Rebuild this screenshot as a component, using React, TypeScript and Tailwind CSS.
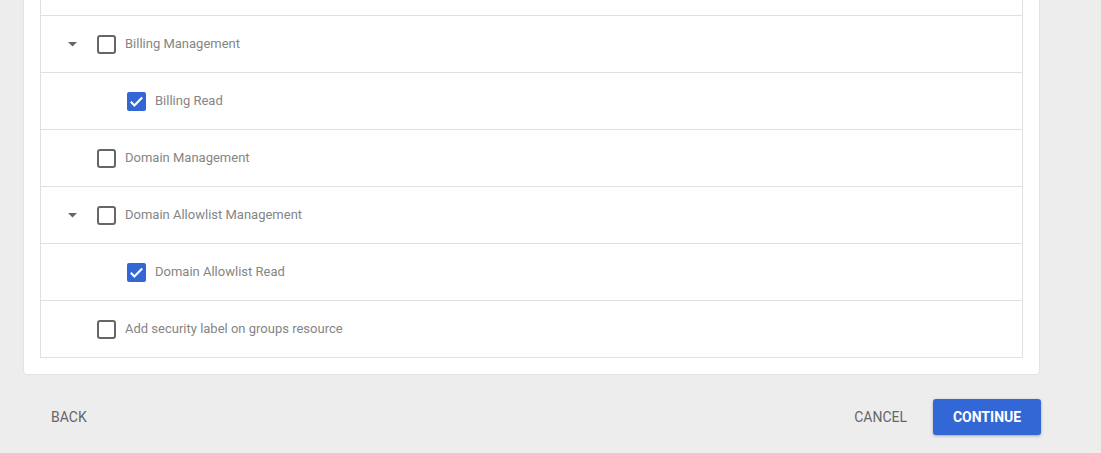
type Permission = {
  label: string;
  level: 1 | 2;
  checked?: boolean;
  expandable?: boolean;
};

// first row is scrolled out of view above the fold
const permissions: Permission[] = [
  { label: "", level: 2 },
  { label: "Billing Management", level: 1, expandable: true },
  { label: "Billing Read", level: 2, checked: true },
  { label: "Domain Management", level: 1 },
  { label: "Domain Allowlist Management", level: 1, expandable: true },
  { label: "Domain Allowlist Read", level: 2, checked: true },
  { label: "Add security label on groups resource", level: 1 },
];

function Checkbox({ checked }: { checked?: boolean }) {
  if (checked) {
    return (
      <span className="flex h-[19px] w-[19px] items-center justify-center rounded-[2px] bg-[#3367d6]">
        <svg width="17" height="17" viewBox="0 0 24 24" fill="none">
          <path d="M4 12.5l5 5L20 6.5" stroke="#ffffff" strokeWidth="3" />
        </svg>
      </span>
    );
  }
  return <span className="block h-[19px] w-[19px] rounded-[3px] border-2 border-[#666666]" />;
}

function PermissionRow({ item }: { item: Permission }) {
  return (
    <div className="flex h-[57px] items-center border-b border-[#e0e0e0] pl-[19px]">
      <span className="flex w-[24px] shrink-0 justify-center">
        {item.expandable ? (
          <svg width="9" height="5" viewBox="0 0 9 5">
            <path d="M0 0h9L4.5 4.5z" fill="#666666" />
          </svg>
        ) : null}
      </span>
      <span className={item.level === 2 ? "ml-[43px] shrink-0" : "ml-[13px] shrink-0"}>
        <Checkbox checked={item.checked} />
      </span>
      <span className="ml-[9px] text-[13px] text-[#858585]">{item.label}</span>
    </div>
  );
}

export default function App() {
  return (
    <div className="h-[453px] w-[1101px] overflow-hidden bg-[#ededed] font-['Roboto',sans-serif]">
      <div className="-mt-[59px] ml-[23px] w-[1017px] rounded-[4px] border border-[#e2e2e2] bg-white px-[16px] pb-[16px] pt-[16px]">
        <div className="border-x border-t border-[#e0e0e0]">
          {permissions.map((item, i) => (
            <PermissionRow key={i} item={item} />
          ))}
        </div>
      </div>
      <div className="ml-[23px] mt-[24px] flex w-[1018px] items-center">
        <button
          type="button"
          className="ml-[12px] h-[36px] px-[16px] text-[14px] uppercase text-[#666666]"
        >
          Back
        </button>
        <div className="ml-auto flex items-center gap-[10px]">
          <button
            type="button"
            className="h-[36px] px-[16px] text-[14px] uppercase text-[#666666]"
          >
            Cancel
          </button>
          <button
            type="button"
            className="h-[36px] w-[108px] rounded-[3px] bg-[#3367d6] text-[14px] font-bold uppercase text-white shadow-[0_1px_3px_rgba(0,0,0,0.3)]"
          >
            Continue
          </button>
        </div>
      </div>
    </div>
  );
}
